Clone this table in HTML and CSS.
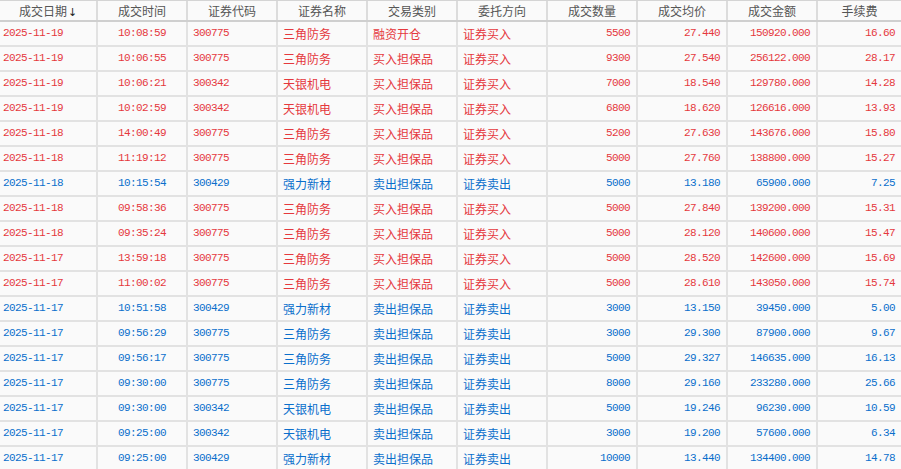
FILE: index.html
```html
<!DOCTYPE html>
<html lang="zh">
<head>
<meta charset="utf-8">
<link rel="stylesheet" href="styles.css">
</head>
<body>
<div class="grid">
  <div class="row head">
    <div class="c">成交日期<span class="arrow">↓</span></div>
    <div class="c">成交时间</div>
    <div class="c">证券代码</div>
    <div class="c">证券名称</div>
    <div class="c">交易类别</div>
    <div class="c">委托方向</div>
    <div class="c">成交数量</div>
    <div class="c">成交均价</div>
    <div class="c">成交金额</div>
    <div class="c">手续费</div>
  </div>
  <div class="row buy"><div class="c n l">2025-11-19</div><div class="c n m">10:08:59</div><div class="c n l2">300775</div><div class="c l2">三角防务</div><div class="c l2">融资开仓</div><div class="c l2">证券买入</div><div class="c n r">5500</div><div class="c n r">27.440</div><div class="c n r">150920.000</div><div class="c n r">16.60</div></div>
  <div class="row buy"><div class="c n l">2025-11-19</div><div class="c n m">10:06:55</div><div class="c n l2">300775</div><div class="c l2">三角防务</div><div class="c l2">买入担保品</div><div class="c l2">证券买入</div><div class="c n r">9300</div><div class="c n r">27.540</div><div class="c n r">256122.000</div><div class="c n r">28.17</div></div>
  <div class="row buy"><div class="c n l">2025-11-19</div><div class="c n m">10:06:21</div><div class="c n l2">300342</div><div class="c l2">天银机电</div><div class="c l2">买入担保品</div><div class="c l2">证券买入</div><div class="c n r">7000</div><div class="c n r">18.540</div><div class="c n r">129780.000</div><div class="c n r">14.28</div></div>
  <div class="row buy"><div class="c n l">2025-11-19</div><div class="c n m">10:02:59</div><div class="c n l2">300342</div><div class="c l2">天银机电</div><div class="c l2">买入担保品</div><div class="c l2">证券买入</div><div class="c n r">6800</div><div class="c n r">18.620</div><div class="c n r">126616.000</div><div class="c n r">13.93</div></div>
  <div class="row buy"><div class="c n l">2025-11-18</div><div class="c n m">14:00:49</div><div class="c n l2">300775</div><div class="c l2">三角防务</div><div class="c l2">买入担保品</div><div class="c l2">证券买入</div><div class="c n r">5200</div><div class="c n r">27.630</div><div class="c n r">143676.000</div><div class="c n r">15.80</div></div>
  <div class="row buy"><div class="c n l">2025-11-18</div><div class="c n m">11:19:12</div><div class="c n l2">300775</div><div class="c l2">三角防务</div><div class="c l2">买入担保品</div><div class="c l2">证券买入</div><div class="c n r">5000</div><div class="c n r">27.760</div><div class="c n r">138800.000</div><div class="c n r">15.27</div></div>
  <div class="row sell"><div class="c n l">2025-11-18</div><div class="c n m">10:15:54</div><div class="c n l2">300429</div><div class="c l2">强力新材</div><div class="c l2">卖出担保品</div><div class="c l2">证券卖出</div><div class="c n r">5000</div><div class="c n r">13.180</div><div class="c n r">65900.000</div><div class="c n r">7.25</div></div>
  <div class="row buy"><div class="c n l">2025-11-18</div><div class="c n m">09:58:36</div><div class="c n l2">300775</div><div class="c l2">三角防务</div><div class="c l2">买入担保品</div><div class="c l2">证券买入</div><div class="c n r">5000</div><div class="c n r">27.840</div><div class="c n r">139200.000</div><div class="c n r">15.31</div></div>
  <div class="row buy"><div class="c n l">2025-11-18</div><div class="c n m">09:35:24</div><div class="c n l2">300775</div><div class="c l2">三角防务</div><div class="c l2">买入担保品</div><div class="c l2">证券买入</div><div class="c n r">5000</div><div class="c n r">28.120</div><div class="c n r">140600.000</div><div class="c n r">15.47</div></div>
  <div class="row buy"><div class="c n l">2025-11-17</div><div class="c n m">13:59:18</div><div class="c n l2">300775</div><div class="c l2">三角防务</div><div class="c l2">买入担保品</div><div class="c l2">证券买入</div><div class="c n r">5000</div><div class="c n r">28.520</div><div class="c n r">142600.000</div><div class="c n r">15.69</div></div>
  <div class="row buy"><div class="c n l">2025-11-17</div><div class="c n m">11:00:02</div><div class="c n l2">300775</div><div class="c l2">三角防务</div><div class="c l2">买入担保品</div><div class="c l2">证券买入</div><div class="c n r">5000</div><div class="c n r">28.610</div><div class="c n r">143050.000</div><div class="c n r">15.74</div></div>
  <div class="row sell"><div class="c n l">2025-11-17</div><div class="c n m">10:51:58</div><div class="c n l2">300429</div><div class="c l2">强力新材</div><div class="c l2">卖出担保品</div><div class="c l2">证券卖出</div><div class="c n r">3000</div><div class="c n r">13.150</div><div class="c n r">39450.000</div><div class="c n r">5.00</div></div>
  <div class="row sell"><div class="c n l">2025-11-17</div><div class="c n m">09:56:29</div><div class="c n l2">300775</div><div class="c l2">三角防务</div><div class="c l2">卖出担保品</div><div class="c l2">证券卖出</div><div class="c n r">3000</div><div class="c n r">29.300</div><div class="c n r">87900.000</div><div class="c n r">9.67</div></div>
  <div class="row sell"><div class="c n l">2025-11-17</div><div class="c n m">09:56:17</div><div class="c n l2">300775</div><div class="c l2">三角防务</div><div class="c l2">卖出担保品</div><div class="c l2">证券卖出</div><div class="c n r">5000</div><div class="c n r">29.327</div><div class="c n r">146635.000</div><div class="c n r">16.13</div></div>
  <div class="row sell"><div class="c n l">2025-11-17</div><div class="c n m">09:30:00</div><div class="c n l2">300775</div><div class="c l2">三角防务</div><div class="c l2">卖出担保品</div><div class="c l2">证券卖出</div><div class="c n r">8000</div><div class="c n r">29.160</div><div class="c n r">233280.000</div><div class="c n r">25.66</div></div>
  <div class="row sell"><div class="c n l">2025-11-17</div><div class="c n m">09:30:00</div><div class="c n l2">300342</div><div class="c l2">天银机电</div><div class="c l2">卖出担保品</div><div class="c l2">证券卖出</div><div class="c n r">5000</div><div class="c n r">19.246</div><div class="c n r">96230.000</div><div class="c n r">10.59</div></div>
  <div class="row sell"><div class="c n l">2025-11-17</div><div class="c n m">09:25:00</div><div class="c n l2">300342</div><div class="c l2">天银机电</div><div class="c l2">卖出担保品</div><div class="c l2">证券卖出</div><div class="c n r">3000</div><div class="c n r">19.200</div><div class="c n r">57600.000</div><div class="c n r">6.34</div></div>
  <div class="row sell"><div class="c n l">2025-11-17</div><div class="c n m">09:25:00</div><div class="c n l2">300429</div><div class="c l2">强力新材</div><div class="c l2">卖出担保品</div><div class="c l2">证券卖出</div><div class="c n r">10000</div><div class="c n r">13.440</div><div class="c n r">134400.000</div><div class="c n r">14.78</div></div>
</div>
</body>
</html>
```
FILE: styles.css
```css
html, body {
  margin: 0;
  padding: 0;
  background: #fafafa;
  overflow: hidden;
}
.grid {
  width: 901px;
  font-family: "Noto Sans CJK SC", sans-serif;
  font-size: 12px;
}
.row {
  display: grid;
  grid-template-columns: 98px repeat(8, 90px) 1fr;
  height: 25px;
  border-bottom: 2px solid #e2e2e2;
  box-sizing: border-box;
}
.row.head {
  height: 22px;
  border-top: 1px solid #d4d4d4;
  border-bottom: 2px solid #cfcfcf;
  color: #555;
}
.c {
  border-right: 2px solid #e2e2e2;
  box-sizing: border-box;
  line-height: 23px;
  white-space: nowrap;
  overflow: hidden;
}
.head .c {
  line-height: 19px;
  text-align: center;
  border-right-color: #dcdcdc;
}
.c:last-child { border-right: none; }
.arrow {
  font-family: "DejaVu Sans", sans-serif;
  font-size: 11px;
  color: #222;
  margin-left: 1px;
}
.n {
  font-family: "Liberation Mono", monospace;
  font-size: 11px;
  letter-spacing: -0.6px;
}
.l { text-align: left; padding-left: 3px; }
.l2 { text-align: left; padding-left: 5px; }
.m { text-align: center; }
.r { text-align: right; padding-right: 6px; }
.buy { color: #e5383d; }
.sell { color: #0a6fcc; }
```
